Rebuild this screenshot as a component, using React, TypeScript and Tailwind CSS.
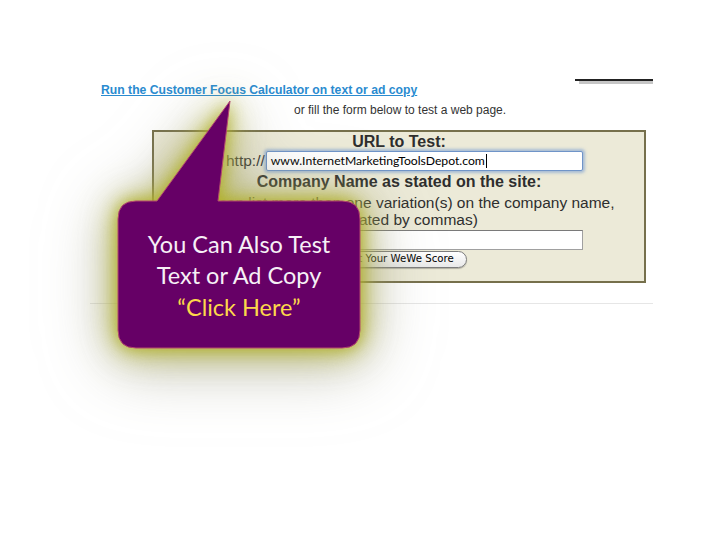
import React from "react";

const sans = "font-['Liberation_Sans',Arial,Helvetica,sans-serif]";

function UrlInput() {
  return (
    <div className="ml-px flex h-[20px] w-[317px] items-center rounded-[2px] border border-[#6f94c8] bg-white pl-[4px] shadow-[0_0_3px_2px_rgba(110,150,210,0.55)]">
      <span className="font-['Lato','Open_Sans',sans-serif] text-[12.2px] leading-none text-black">
        www.InternetMarketingToolsDepot.com
      </span>
      <span className="ml-px h-[14px] w-px bg-black" />
    </div>
  );
}

function Callout() {
  return (
    <>
      {/* Speech bubble with glow */}
      <svg
        width="242"
        height="249"
        viewBox="0 0 242 249"
        className="absolute left-[118px] top-[100px] overflow-visible [filter:drop-shadow(0_0_8px_rgba(175,175,35,0.95))_drop-shadow(0_2px_16px_rgba(185,185,60,0.8))_drop-shadow(0_8px_30px_rgba(140,140,120,0.6))]"
        aria-hidden
      >
        <path
          d="M18 101 L39 101 L112 1 L100 101 L224 101 Q242 101 242 119 L242 230 Q242 248 224 248 L18 248 Q0 248 0 230 L0 119 Q0 101 18 101 Z"
          fill="#660066"
          stroke="#b2486e"
          strokeWidth="1"
        />
      </svg>
      <div className="absolute left-[118px] top-[201px] flex h-[147px] w-[242px] flex-col items-center justify-center pt-[3px] font-['Lato','Open_Sans',sans-serif] text-[23.5px] leading-[31.5px]">
        <span className="text-[#f6f0f6]">You Can Also Test</span>
        <span className="text-[#f6f0f6]">Text or Ad Copy</span>
        <span className="text-[#fcd84a]">“Click Here”</span>
      </div>
    </>
  );
}

export default function App() {
  return (
    <div className={`relative h-[546px] w-[728px] overflow-hidden bg-white ${sans}`}>
      <div className="pl-[101px] pr-[75px] pt-[79px]">
        <div className="flex items-start justify-between">
          <a
            href="#"
            className="mt-[4px] text-[12.2px] font-bold leading-[14px] text-[#2a8bd0] underline"
          >
            Run the Customer Focus Calculator on text or ad copy
          </a>
          <div className="flex w-[78px] flex-col">
            <div className="h-[2px] bg-[#222]" />
            <div className="ml-[4px] h-[3px] bg-[#c6c6c6]" />
          </div>
        </div>
      </div>

      <p className="mt-[6px] pl-[294px] text-[12px] leading-[14px] text-[#333]">
        or fill the form below to test a web page.
      </p>

      {/* Form box */}
      <div className="ml-[152px] mt-[13px] flex h-[153px] w-[494px] flex-col border-2 border-[#76704c] bg-[#ecead8] text-[#2e2e2e]">
        <div className="h-[19px] text-center text-[16px] font-bold leading-[19px]">
          URL to Test:
        </div>
        <div className="flex h-[20px] items-center pl-[72px]">
          <span className="text-[15.5px] leading-none">http://</span>
          <UrlInput />
        </div>
        <div className="h-[21px] text-center text-[16px] font-bold leading-[21px]">
          Company Name as stated on the site:
        </div>
        <p className="mt-[2px] text-center text-[15.5px] leading-[17px]">
          (You can list more than one variation(s) on the company name,
          <br />
          separated by commas)
        </p>
        <div className="mx-auto mt-[2px] h-[20px] w-[368px] border border-[#a0a0a0] border-t-[#7a7a7a] bg-white" />
        <div className="mt-px flex justify-center">
          <button className="flex h-[17px] w-[136px] items-center justify-center rounded-full border border-[#7d7d7d] bg-gradient-to-b from-white to-[#e9e9e9] font-['DejaVu_Sans',sans-serif] text-[10.2px] leading-none text-black shadow-[0_1px_1px_rgba(0,0,0,0.25)]">
            Get Your WeWe Score
          </button>
        </div>
      </div>

      <div className="ml-[90px] mt-[20px] h-px w-[563px] bg-[#e6e6e6]" />

      <Callout />
    </div>
  );
}
